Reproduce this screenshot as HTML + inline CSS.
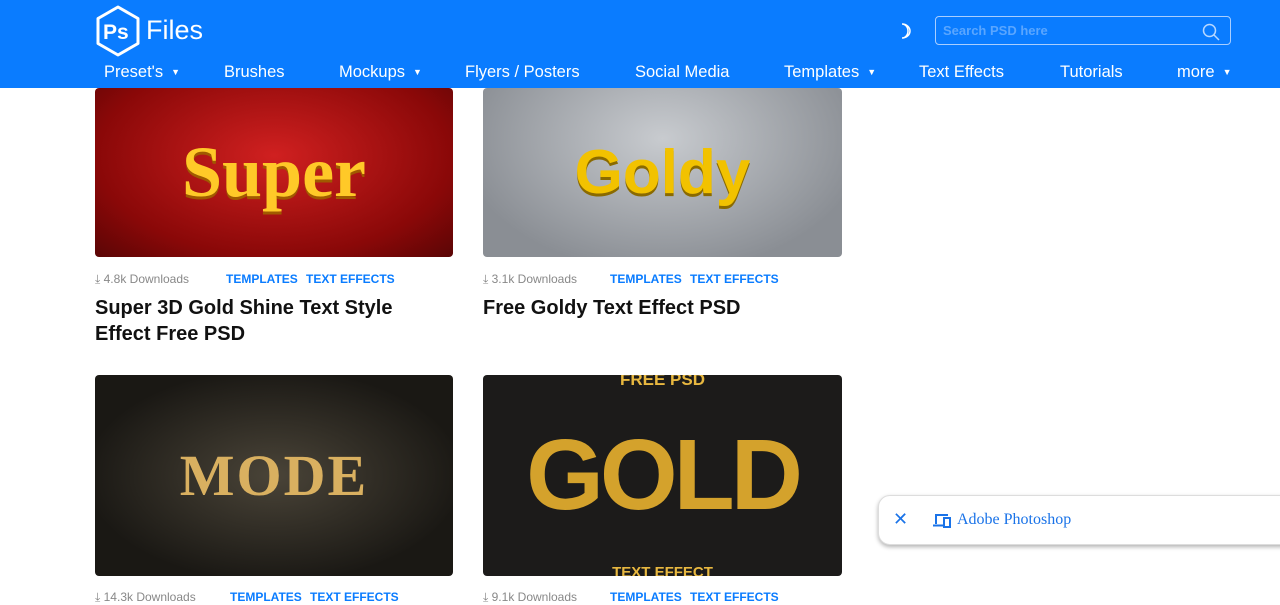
<!DOCTYPE html>
<html><head><style>
*{margin:0;padding:0;box-sizing:border-box}
body{width:1280px;height:598px;overflow:hidden;background:#fff;font-family:"Liberation Sans",sans-serif;position:relative}
.hdr{position:absolute;left:0;top:0;width:1280px;height:88px;background:#0a7cff;color:#fff}
.logo{position:absolute;left:95px;top:5px}
.logo span{position:absolute;left:51px;top:10px;font-size:27px;white-space:nowrap}
.nav{position:absolute;top:63px;font-size:16.5px;white-space:nowrap}
.tri{font-size:9px;margin-left:8px;vertical-align:2px}
.search{position:absolute;left:935px;top:16px;width:296px;height:29px;border:1.5px solid #a9ceff;border-radius:4px;color:#5aa6ff;font-size:13px;font-weight:bold;padding:6px 7px}
.img{position:absolute;border-radius:4px;overflow:hidden;display:flex;align-items:center;justify-content:center;font-weight:bold}
.meta{position:absolute;font-size:12px;color:#888;white-space:nowrap}
.meta b{position:absolute;top:0;color:#0a7cff;font-size:12px;font-weight:900}
.title{position:absolute;font-size:20px;font-weight:bold;color:#111;line-height:26px;width:358px}
.pop{position:absolute;left:878px;top:495px;width:420px;height:50px;background:#fff;border:1px solid #ddd;border-radius:12px;box-shadow:0 2px 4px rgba(0,0,0,.3);font-family:"Liberation Serif",serif;color:#1a73e8;font-size:16px}
</style></head><body>
<div class="hdr">
 <div class="logo"><svg width="46" height="52" viewBox="0 0 46 52"><path d="M23 2 L43 13.5 V38.5 L23 50 L3 38.5 V13.5 Z" fill="none" stroke="#fff" stroke-width="3" stroke-linejoin="round"/><text x="8" y="34" font-family="Liberation Sans" font-weight="bold" font-size="21" fill="#fff">Ps</text></svg><span>Files</span></div>
 <div class="nav" style="left:104px">Preset's<span class="tri">▼</span></div>
 <div class="nav" style="left:224px">Brushes</div>
 <div class="nav" style="left:339px">Mockups<span class="tri">▼</span></div>
 <div class="nav" style="left:465px">Flyers / Posters</div>
 <div class="nav" style="left:635px">Social Media</div>
 <div class="nav" style="left:784px">Templates<span class="tri">▼</span></div>
 <div class="nav" style="left:919px">Text Effects</div>
 <div class="nav" style="left:1060px">Tutorials</div>
 <div class="nav" style="left:1177px">more<span class="tri">▼</span></div>
 <svg style="position:absolute;left:898px;top:22px" width="16" height="18" viewBox="0 0 16 18"><path d="M4 2 A8 7 0 0 1 4 16 A6 7 0 0 0 4 2Z" fill="none" stroke="#fff" stroke-width="1.5"/></svg>
 <div class="search">Search PSD here<svg style="position:absolute;right:10px;top:6px" width="18" height="18" viewBox="0 0 18 18"><circle cx="7.5" cy="7.5" r="6" fill="none" stroke="#b8d8ff" stroke-width="1.5"/><path d="M12 12 L17 17" stroke="#b8d8ff" stroke-width="1.5"/></svg></div>
</div>

<div class="img" style="left:95px;top:88px;width:358px;height:169px;background:radial-gradient(ellipse at 50% 40%,#d02020,#8a0808 70%,#5a0505);color:#ffc928;font-size:72px;font-family:'Liberation Serif',serif;text-shadow:0 3px 0 #a05a00">Super</div>
<div class="img" style="left:483px;top:88px;width:359px;height:169px;background:radial-gradient(ellipse at 50% 30%,#c8cbcf,#8a8e94 80%);color:#f2c200;font-size:62px;text-shadow:0 3px 0 #8a6a00">Goldy</div>
<div class="meta" style="left:95px;top:272px">⤓ 4.8k Downloads<b style="left:131px">TEMPLATES</b><b style="left:211px">TEXT EFFECTS</b></div>
<div class="meta" style="left:483px;top:272px">⤓ 3.1k Downloads<b style="left:127px">TEMPLATES</b><b style="left:207px">TEXT EFFECTS</b></div>
<div class="title" style="left:95px;top:295px">Super 3D Gold Shine Text Style Effect Free PSD</div>
<div class="title" style="left:483px;top:295px">Free Goldy Text Effect PSD</div>

<div class="img" style="left:95px;top:375px;width:358px;height:201px;background:radial-gradient(ellipse at 50% 50%,#4a4438,#1a1814 75%);color:#d9b060;font-size:58px;font-family:'Liberation Serif',serif;letter-spacing:2px">MODE</div>
<div class="img" style="left:483px;top:375px;width:359px;height:201px;background:#1c1b1a;color:#d4a22c;font-size:100px;letter-spacing:-4px"><span style="position:absolute;top:-5px;font-size:17px;letter-spacing:0;color:#e8b840">FREE PSD</span>GOLD<span style="position:absolute;bottom:-5px;font-size:15px;letter-spacing:0;color:#e8b840">TEXT EFFECT</span></div>
<div class="meta" style="left:95px;top:590px">⤓ 14.3k Downloads<b style="left:135px">TEMPLATES</b><b style="left:215px">TEXT EFFECTS</b></div>
<div class="meta" style="left:483px;top:590px">⤓ 9.1k Downloads<b style="left:127px">TEMPLATES</b><b style="left:207px">TEXT EFFECTS</b></div>

<div class="pop"><span style="position:absolute;left:14px;top:13px;font-family:'Liberation Sans';font-size:18px">✕</span>
<svg style="position:absolute;left:54px;top:17px" width="18" height="15" viewBox="0 0 18 15"><path d="M3 11V2h12" fill="none" stroke="#1a73e8" stroke-width="2"/><path d="M0 12.5h10" stroke="#1a73e8" stroke-width="2"/><rect x="11" y="5" width="6" height="9" fill="none" stroke="#1a73e8" stroke-width="2"/></svg>
<span style="position:absolute;left:78px;top:15px">Adobe Photoshop</span></div>
</body></html>
